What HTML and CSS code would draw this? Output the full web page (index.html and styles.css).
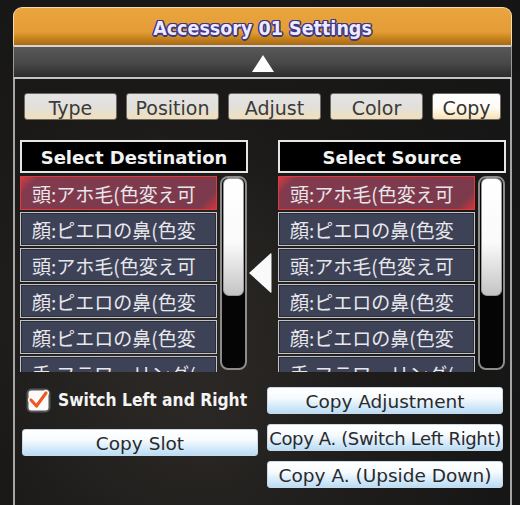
FILE: index.html
```html
<!DOCTYPE html>
<html lang="en">
<head>
  <meta charset="UTF-8" />
  <title>Accessory 01 Settings</title>
  <link rel="stylesheet" href="styles.css">
</head>
<body>
  <div class="panel">
    <div class="title">Accessory 01 Settings</div>
    <div class="collapse"><span class="up"></span></div>

    <div class="content">
      <div class="tabs">
        <div class="tab">Type</div>
        <div class="tab">Position</div>
        <div class="tab">Adjust</div>
        <div class="tab">Color</div>
        <div class="tab tab-small active">Copy</div>
      </div>

      <div class="lists">
        <div class="column">
          <div class="col-head">Select Destination</div>
          <div class="col-body">
            <div class="items">
              <div class="item selected">頭:アホ毛(色変え可</div>
              <div class="item">顔:ピエロの鼻(色変</div>
              <div class="item">頭:アホ毛(色変え可</div>
              <div class="item">顔:ピエロの鼻(色変</div>
              <div class="item">顔:ピエロの鼻(色変</div>
              <div class="item">手:フラワーリング(</div>
            </div>
            <div class="scroll"><div class="thumb"></div></div>
          </div>
        </div>

        <div class="arrow"><span class="left"></span></div>

        <div class="column">
          <div class="col-head">Select Source</div>
          <div class="col-body">
            <div class="items">
              <div class="item selected">頭:アホ毛(色変え可</div>
              <div class="item">顔:ピエロの鼻(色変</div>
              <div class="item">頭:アホ毛(色変え可</div>
              <div class="item">顔:ピエロの鼻(色変</div>
              <div class="item">顔:ピエロの鼻(色変</div>
              <div class="item">手:フラワーリング(</div>
            </div>
            <div class="scroll"><div class="thumb"></div></div>
          </div>
        </div>
      </div>

      <div class="actions">
        <div class="action-col">
          <label class="check">
            <svg class="box" width="25" height="25" viewBox="0 0 25 25">
              <rect x="1.5" y="1.5" width="22" height="22" rx="4" fill="#fafafa" stroke="#555" stroke-width="2"/>
              <path d="M5 12 L10.5 18 L20 5" fill="none" stroke="#fff" stroke-width="6" stroke-linecap="round" stroke-linejoin="round"/>
              <path d="M5 12 L10.5 18 L20 5" fill="none" stroke="#ee5a24" stroke-width="3.2" stroke-linecap="round" stroke-linejoin="round"/>
            </svg>
            <span>Switch Left and Right</span>
          </label>
          <div class="btn slot">Copy Slot</div>
        </div>
        <div class="action-col right">
          <div class="btn">Copy Adjustment</div>
          <div class="btn tight">Copy A. (Switch Left Right)</div>
          <div class="btn">Copy A. (Upside Down)</div>
        </div>
      </div>
    </div>
  </div>
</body>
</html>
```

FILE: styles.css
```css
body {
  margin: 0;
  width: 520px;
  height: 505px;
  overflow: hidden;
  font-family: 'DejaVu Sans', 'Noto Sans CJK JP', sans-serif;
  background: radial-gradient(circle at 30% 60%, #2a2724 0%, #1a1918 45%, #151515 100%);
}

.panel {
  width: 499px;
  margin: 7px 0 0 13px;
}

.title {
  height: 37px;
  line-height: 42px;
  text-align: center;
  border: 1px solid #f1dcb5;
  border-bottom: none;
  border-radius: 9px 9px 0 0;
  background: linear-gradient(to bottom, #eaa53f 0%, #e49c36 65%, #c9861f 80%, #a86815 100%);
  font-family: 'DejaVu Sans Condensed', 'DejaVu Sans', sans-serif;
  font-stretch: condensed;
  font-weight: bold;
  font-size: 19.5px;
  color: #eeeaff;
  text-shadow: 1.5px 0 0 #3b3784, -1.5px 0 0 #3b3784, 0 1.5px 0 #3b3784, 0 -1.5px 0 #3b3784,
    1px 1px 0 #3b3784, -1px -1px 0 #3b3784, 1px -1px 0 #3b3784, -1px 1px 0 #3b3784;
}

.collapse {
  height: 30px;
  border-top: 2px solid #d4d4d4;
  border-bottom: 2px solid #c4c4c4;
  border-left: 1px solid #9a9a9a;
  border-right: 1px solid #9a9a9a;
  background: linear-gradient(to bottom, #585858 0%, #484848 55%, #2c2c2c 100%);
  display: flex;
  justify-content: center;
  align-items: center;
}

.up {
  width: 0;
  height: 0;
  border-left: 11px solid transparent;
  border-right: 11px solid transparent;
  border-bottom: 17px solid #fff;
  margin-top: 2px;
}

.content {
  height: 413px;
  border: 2px solid #a5a5a5;
  border-top: none;
  padding: 14px 0 0 0;
  background: radial-gradient(circle at 40% 85%, rgba(60,55,50,0.35), rgba(0,0,0,0) 60%);
}

.tabs {
  display: flex;
  gap: 9px;
  padding-left: 9px;
}

.tab {
  width: 91px;
  height: 25px;
  line-height: 28px;
  text-align: center;
  border: 1px solid #6e6a62;
  border-radius: 3px;
  background: linear-gradient(to bottom, #e4e4e4 0%, #e2e0dc 50%, #f0dfbb 100%);
  font-size: 19px;
  color: #3a3a3a;
}

.tab-small {
  width: 67px;
}

.tab.active {
  background: linear-gradient(to bottom, #ffffff 0%, #fdfbf6 55%, #f9e2b2 100%);
  color: #333;
}

.lists {
  display: flex;
  margin-top: 20px;
  padding-left: 5px;
}

.column {
  width: 228px;
}

.col-head {
  height: 29px;
  line-height: 31px;
  border: 2px solid #e6e6e6;
  background: #000;
  color: #f2f2f2;
  text-align: center;
  font-weight: bold;
  font-size: 18px;
}

.col-body {
  display: flex;
  gap: 3px;
  margin-top: 3px;
}

.items {
  width: 197px;
  height: 196px;
  overflow: hidden;
  display: flex;
  flex-direction: column;
  gap: 2px;
}

.item {
  flex: none;
  height: 32px;
  line-height: 33px;
  border: 1px solid #c3c3c6;
  background: #3d4257;
  color: #e8e8ec;
  font-family: 'Noto Sans CJK JP', sans-serif;
  font-size: 19px;
  padding-left: 11px;
  white-space: nowrap;
  overflow: hidden;
  box-shadow: inset 0 0 0 1px #2a2d3a;
}

.item.selected {
  border-color: #e23a3a;
  background: linear-gradient(135deg, #d23c44 0%, #813a4e 8%, #7d3a4c 92%, #d3343c 100%);
  box-shadow: none;
}

.scroll {
  width: 23px;
  height: 190px;
  border: 2px solid #8c8c8c;
  border-radius: 8px;
  background: #050505;
}

.thumb {
  width: 19px;
  height: 116px;
  margin: 0 auto;
  border: 1px solid #9a9a9a;
  border-radius: 6px;
  background: linear-gradient(to bottom, #ffffff 0%, #fafafa 55%, #d6d6d6 85%, #c4c4c4 100%);
}

.arrow {
  width: 30px;
  display: flex;
  align-items: center;
  padding-top: 34px;
}

.left {
  width: 0;
  height: 0;
  border-top: 20px solid transparent;
  border-bottom: 20px solid transparent;
  border-right: 22px solid #fafafa;
  margin-left: 1px;
  filter: drop-shadow(1px 0 0 #8a8a8a);
}

.actions {
  display: flex;
  gap: 9px;
  margin-top: 15px;
  padding-left: 7px;
}

.action-col {
  width: 236px;
  display: flex;
  flex-direction: column;
}

.action-col.right {
  gap: 10px;
}

.check {
  display: flex;
  align-items: center;
  gap: 7px;
  height: 26px;
  padding-left: 4px;
  color: #f4f4f4;
  font-family: 'DejaVu Sans Condensed', 'DejaVu Sans', sans-serif;
  font-stretch: condensed;
  font-weight: bold;
  font-size: 17.3px;
}

.btn {
  height: 25px;
  line-height: 27px;
  text-align: center;
  border: 1px solid #c9d9e6;
  border-radius: 3px;
  background: linear-gradient(to bottom, #ffffff 0%, #f7fbfe 40%, #b9dcf6 100%);
  color: #2a2a2a;
  font-size: 18.5px;
  white-space: nowrap;
  overflow: hidden;
}

.btn.tight {
  letter-spacing: -0.35px;
  font-size: 18px;
}

.btn.slot {
  margin-top: 16px;
}
```
